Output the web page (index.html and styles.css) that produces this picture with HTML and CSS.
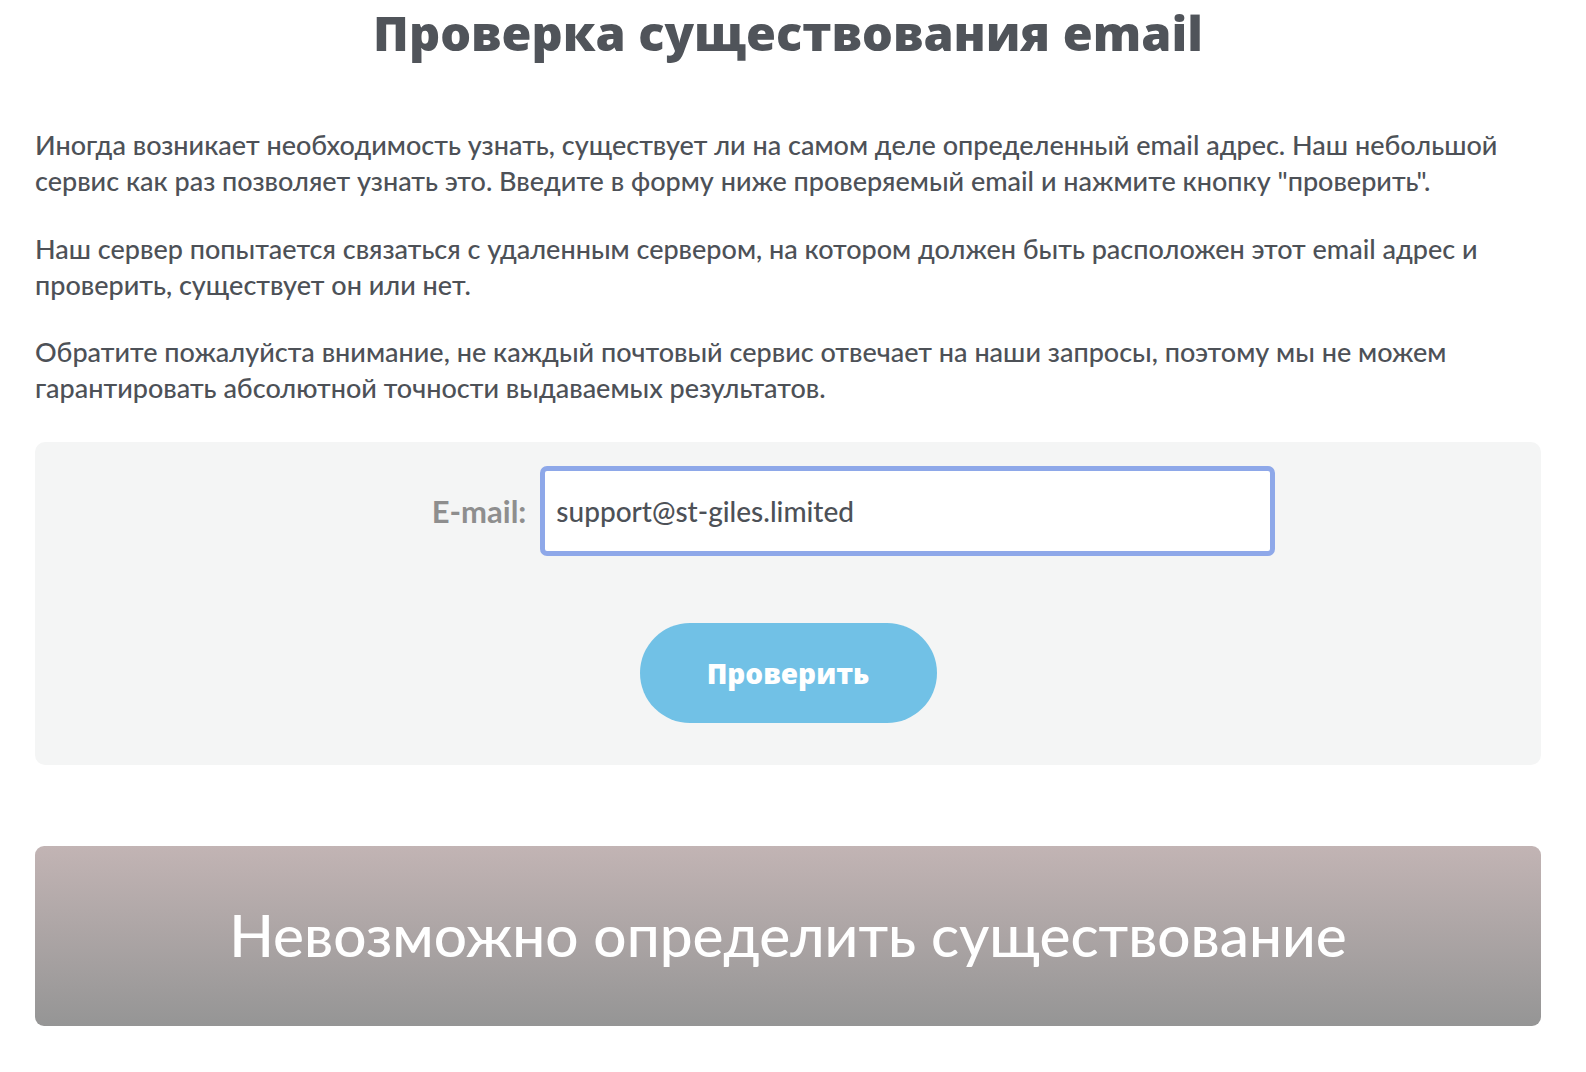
FILE: index.html
```html
<!DOCTYPE html>
<html lang="ru">
<head>
<meta charset="utf-8">
<title>Проверка существования email</title>
<link rel="stylesheet" href="styles.css">
</head>
<body>
<main class="page">
  <h1 class="title">Проверка существования email</h1>
  <p class="text">Иногда возникает необходимость узнать, существует ли на самом деле определенный email адрес. Наш небольшой сервис как раз позволяет узнать это. Введите в форму ниже проверяемый email и нажмите кнопку "проверить".</p>
  <p class="text">Наш сервер попытается связаться с удаленным сервером, на котором должен быть расположен этот email адрес и проверить, существует он или нет.</p>
  <p class="text">Обратите пожалуйста внимание, не каждый почтовый сервис отвечает на наши запросы, поэтому мы не можем гарантировать абсолютной точности выдаваемых результатов.</p>
  <form class="form">
    <div class="field">
      <label class="label" for="email">E-mail:</label>
      <input class="input" id="email" type="text" value="support@st-giles.limited">
    </div>
    <button class="btn" type="button">Проверить</button>
  </form>
  <div class="result">Невозможно определить существование</div>
</main>
</body>
</html>
```
FILE: styles.css
```css
html, body {
  margin: 0;
  padding: 0;
  background: #ffffff;
}
.page {
  padding: 0 45px 0 35px;
  font-family: "Lato", "Open Sans", sans-serif;
  color: #4d5157;
}
.title {
  margin: 0;
  padding-top: 2px;
  text-align: center;
  font-family: "Open Sans", sans-serif;
  font-weight: 800;
  font-size: 48.5px;
  line-height: 60px;
  color: #50545a;
}
.text {
  margin: 0;
  font-size: 27px;
  line-height: 36.3px;
  font-weight: 500;
}
.title + .text {
  margin-top: 65px;
}
.text + .text {
  margin-top: 31px;
}
.form {
  margin-top: 35px;
  background: #f4f5f5;
  border-radius: 10px;
  height: 323px;
  box-sizing: border-box;
  padding-top: 24px;
  display: flex;
  flex-direction: column;
  align-items: center;
}
.field {
  display: flex;
  align-items: center;
  gap: 14px;
  margin-left: 131px;
}
.label {
  font-size: 31px;
  font-weight: 700;
  color: #8e8e8e;
}
.input {
  box-sizing: border-box;
  width: 735px;
  height: 90px;
  border: 5px solid #8ea8e9;
  border-radius: 7px;
  background: #fff;
  padding: 0 11px;
  font-family: "Lato", "Open Sans", sans-serif;
  font-size: 28px;
  font-weight: 500;
  color: #4d5157;
  outline: none;
}
.btn {
  margin-top: 67px;
  width: 297px;
  height: 100px;
  border: none;
  border-radius: 50px;
  background: #71c1e6;
  color: #fff;
  font-family: "Open Sans", sans-serif;
  font-weight: 800;
  font-size: 28px;
  cursor: pointer;
}
.result {
  margin-top: 81px;
  height: 180px;
  border-radius: 9px;
  background: linear-gradient(to bottom, #c2b4b4, #959595);
  color: #fff;
  display: flex;
  align-items: center;
  justify-content: center;
  font-size: 58.5px;
  font-weight: 500;
  padding-bottom: 4px;
  box-sizing: border-box;
}
```
